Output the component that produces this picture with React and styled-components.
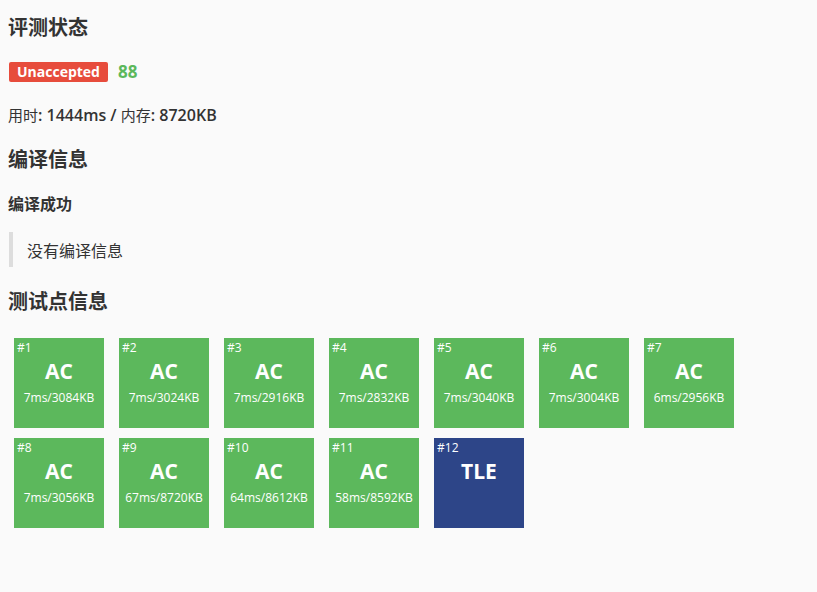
import React from "react";
import styled, { createGlobalStyle } from "styled-components";

const Global = createGlobalStyle`
  html, body { margin: 0; padding: 0; background: #fafafa; }
  body {
    font-family: "Open Sans", "Noto Sans CJK SC", sans-serif;
    color: #333;
  }
`;

const Page = styled.div`
  padding: 0 8px;
  width: 817px;
  box-sizing: border-box;
`;

const H = styled.h2`
  margin: 0;
  font-size: 20px;
  font-weight: 700;
  line-height: 26px;
  color: #333;
  padding-top: ${(p) => p.$pt || 0}px;
`;

const StatusRow = styled.div`
  display: flex;
  align-items: center;
  gap: 10px;
  margin-top: 19px;
  padding-left: 1px;
`;

const Badge = styled.span`
  display: inline-block;
  background: #e74c3c;
  color: #fff;
  font-weight: 700;
  font-size: 14px;
  line-height: 20px;
  height: 20px;
  padding: 0 8px;
  border-radius: 2px;
`;

const Score = styled.span`
  color: #5cb85c;
  font-weight: 700;
  font-size: 17px;
`;

const Info = styled.div`
  font-size: 15px;
  margin-top: 22px;
  line-height: 20px;
  color: #333;
`;

const Latin = styled.span`
  font-size: 16px;
  font-weight: 600;
`;

const Sub = styled.h3`
  margin: 20px 0 0;
  font-size: 16px;
  font-weight: 700;
  line-height: 22px;
`;

const Quote = styled.blockquote`
  margin: 17px 0 0 1px;
  border-left: 4px solid #ddd;
  padding: 0 0 0 14px;
  height: 35px;
  display: flex;
  align-items: center;
  font-size: 16px;
  color: #333;
`;

const Grid = styled.div`
  display: grid;
  grid-template-columns: repeat(7, 90px);
  column-gap: 15px;
  row-gap: 10px;
  margin-top: 23px;
  padding-left: 6px;
`;

const Box = styled.div`
  position: relative;
  width: 90px;
  height: 90px;
  background: ${(p) => (p.$tle ? "#2d4588" : "#5cb85c")};
  color: #fff;
  display: flex;
  flex-direction: column;
  align-items: center;
`;

const Num = styled.span`
  position: absolute;
  left: 3px;
  top: 2px;
  font-size: 12px;
  line-height: 16px;
`;

const Verdict = styled.div`
  font-size: 21px;
  font-weight: 700;
  margin-top: 20px;
  line-height: 26px;
`;

const Detail = styled.div`
  font-size: 12px;
  margin-top: 6px;
  line-height: 16px;
  white-space: nowrap;
`;

const cases = [
  ["AC", "7ms/3084KB"],
  ["AC", "7ms/3024KB"],
  ["AC", "7ms/2916KB"],
  ["AC", "7ms/2832KB"],
  ["AC", "7ms/3040KB"],
  ["AC", "7ms/3004KB"],
  ["AC", "6ms/2956KB"],
  ["AC", "7ms/3056KB"],
  ["AC", "67ms/8720KB"],
  ["AC", "64ms/8612KB"],
  ["AC", "58ms/8592KB"],
  ["TLE", ""],
];

export default function App() {
  return (
    <Page>
      <Global />
      <H $pt={15}>评测状态</H>
      <StatusRow>
        <Badge>Unaccepted</Badge>
        <Score>88</Score>
      </StatusRow>
      <Info>
        用时<Latin>: 1444ms / </Latin>内存<Latin>: 8720KB</Latin>
      </Info>
      <H $pt={22}>编译信息</H>
      <Sub>编译成功</Sub>
      <Quote>没有编译信息</Quote>
      <H $pt={22}>测试点信息</H>
      <Grid>
        {cases.map(([v, d], i) => (
          <Box key={i} $tle={v === "TLE"}>
            <Num>#{i + 1}</Num>
            <Verdict>{v}</Verdict>
            {d && <Detail>{d}</Detail>}
          </Box>
        ))}
      </Grid>
    </Page>
  );
}
